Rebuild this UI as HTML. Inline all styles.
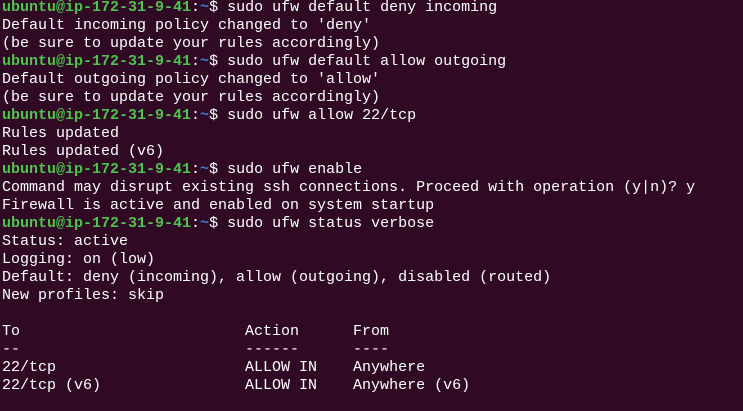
<!DOCTYPE html>
<html><head><meta charset="utf-8"><style>
html,body{margin:0;padding:0;background:#300a24;width:743px;height:411px;overflow:hidden}
pre{margin:0;padding:0 0 0 2px;font-family:"Liberation Mono",monospace;font-size:15px;line-height:18px;color:#ffffff;position:relative;top:-1px}
.g{color:#4fc24f;font-weight:bold}.b{color:#3e7fd6;font-weight:bold}
</style></head><body><pre><span class="g">ubuntu@ip-172-31-9-41</span>:<span class="b">~</span>$ sudo ufw default deny incoming
Default incoming policy changed to 'deny'
(be sure to update your rules accordingly)
<span class="g">ubuntu@ip-172-31-9-41</span>:<span class="b">~</span>$ sudo ufw default allow outgoing
Default outgoing policy changed to 'allow'
(be sure to update your rules accordingly)
<span class="g">ubuntu@ip-172-31-9-41</span>:<span class="b">~</span>$ sudo ufw allow 22/tcp
Rules updated
Rules updated (v6)
<span class="g">ubuntu@ip-172-31-9-41</span>:<span class="b">~</span>$ sudo ufw enable
Command may disrupt existing ssh connections. Proceed with operation (y|n)? y
Firewall is active and enabled on system startup
<span class="g">ubuntu@ip-172-31-9-41</span>:<span class="b">~</span>$ sudo ufw status verbose
Status: active
Logging: on (low)
Default: deny (incoming), allow (outgoing), disabled (routed)
New profiles: skip

To                         Action      From
--                         ------      ----
22/tcp                     ALLOW IN    Anywhere
22/tcp (v6)                ALLOW IN    Anywhere (v6)
</pre></body></html>
